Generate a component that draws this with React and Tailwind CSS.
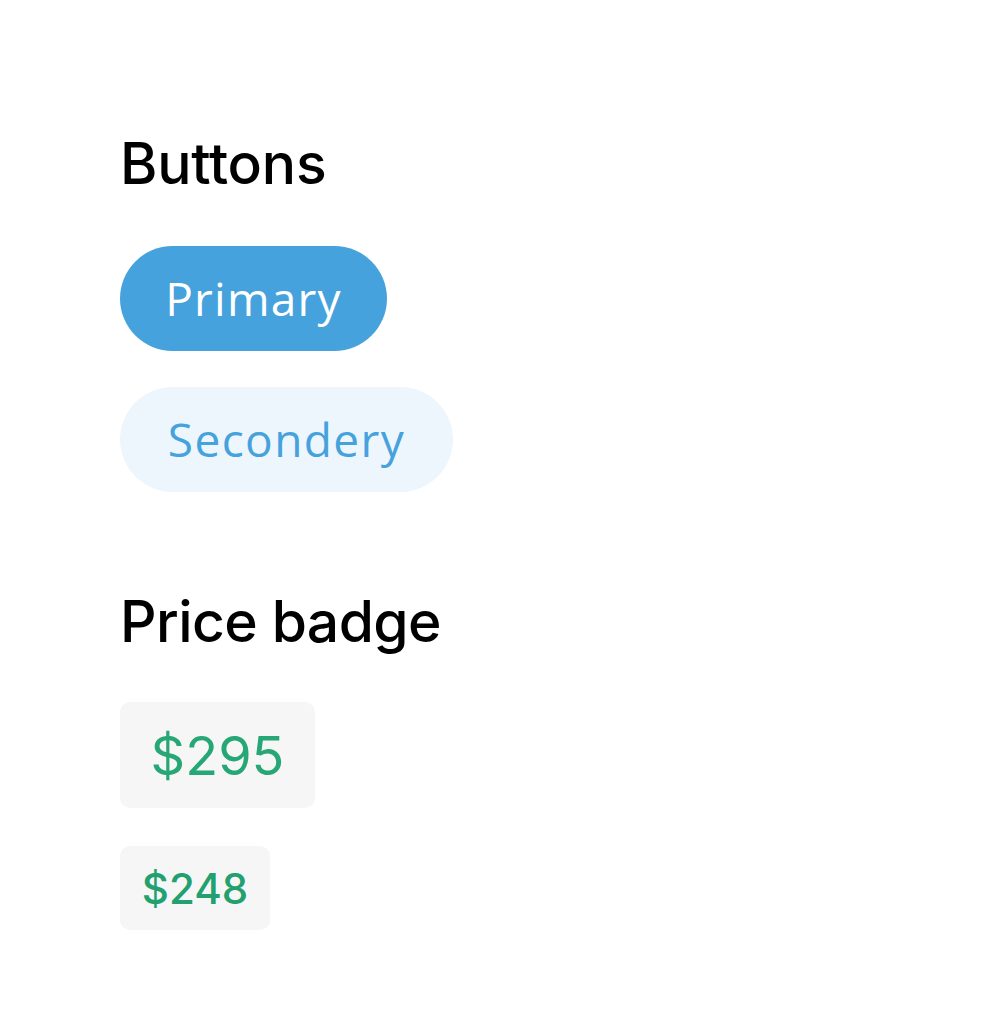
export default function App() {
  return (
    <div className="min-h-[1029px] w-[990px] bg-white pl-[120px] pt-[132px]" style={{ fontFamily: "Inter, 'Noto Sans', sans-serif" }}>
      <h2 className="text-[57px] leading-[64px] font-medium text-black tracking-[-0.2px]">Buttons</h2>
      <div className="mt-[50px] flex flex-col items-start gap-[36px]">
        <button className="h-[105px] w-[267px] rounded-full bg-[#46a2dc] text-[46px] font-medium tracking-[1.2px] text-white" style={{ fontFamily: "'Open Sans', sans-serif" }}>Primary</button>
        <button className="h-[105px] w-[333px] rounded-full bg-[#edf6fc] text-[46px] font-medium tracking-[1.4px] text-[#46a2dc]" style={{ fontFamily: "'Open Sans', sans-serif" }}>Secondery</button>
      </div>
      <h2 className="mt-[98px] text-[57px] leading-[64px] font-medium text-black tracking-[-0.6px]">Price badge</h2>
      <div className="mt-[48px] flex flex-col items-start gap-[38px]">
        <div className="flex h-[106px] w-[195px] items-center justify-center rounded-[10px] bg-[#f6f6f6] text-[54px] text-[#27a775]">$295</div>
        <div className="flex h-[84px] w-[150px] items-center justify-center rounded-[10px] bg-[#f6f6f6] text-[42px] font-medium text-[#22a06f]">$248</div>
      </div>
    </div>
  );
}
